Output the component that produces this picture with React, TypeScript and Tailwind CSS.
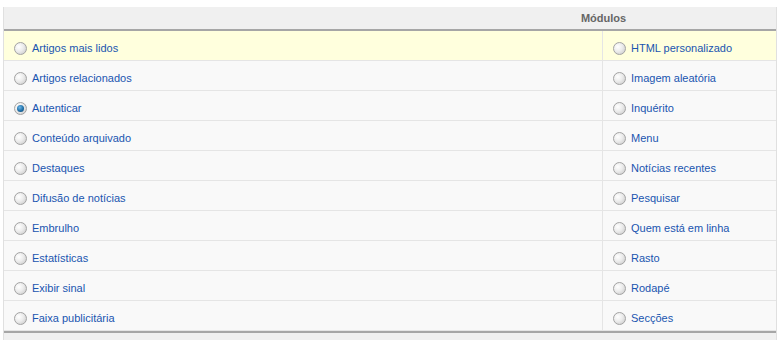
const left = [
  'Artigos mais lidos',
  'Artigos relacionados',
  'Autenticar',
  'Conteúdo arquivado',
  'Destaques',
  'Difusão de notícias',
  'Embrulho',
  'Estatísticas',
  'Exibir sinal',
  'Faixa publicitária',
];

const right = [
  'HTML personalizado',
  'Imagem aleatória',
  'Inquérito',
  'Menu',
  'Notícias recentes',
  'Pesquisar',
  'Quem está em linha',
  'Rasto',
  'Rodapé',
  'Secções',
];

function Radio({ checked }: { checked?: boolean }) {
  return (
    <span className="relative inline-block w-[13px] h-[13px] shrink-0 rounded-full border border-[#a3a3a3] bg-[radial-gradient(circle_at_35%_35%,#ffffff_0%,#ececec_45%,#c4c4c4_100%)]">
      {checked && (
        <span className="absolute left-[2px] top-[2px] w-[7px] h-[7px] rounded-full bg-[radial-gradient(circle_at_40%_35%,#6fb8e8_0%,#1f6fa8_55%,#0c3f66_100%)]" />
      )}
    </span>
  );
}

function Cell({ label, checked }: { label: string; checked?: boolean }) {
  return (
    <div className="flex items-center gap-[5px] pl-[10px] pt-[5px]">
      <Radio checked={checked} />
      <span className="text-[#1a55b0]">{label}</span>
    </div>
  );
}

export default function App() {
  return (
    <div className="w-[777px] h-[340px] bg-white pt-[7px] pl-[3px] overflow-hidden font-['Liberation_Sans',Arial,sans-serif] text-[11px]">
      <div className="border-l border-r border-[#e0e0e0]">
        {/* Header */}
        <div className="flex h-[24px] bg-[#f0f0f0] border-b-2 border-[#a6a6a6]">
          <div className="w-[427px]" />
          <div className="flex-1 flex items-center justify-center font-bold text-[#666]">Módulos</div>
        </div>

        {/* Rows */}
        {left.map((name, i) => (
          <div
            key={name}
            className={`grid grid-cols-[599px_1fr] h-[30px] border-b border-[#e5e5e5] ${
              i === 0 ? 'bg-[#ffffdd]' : 'bg-[#f9f9f9]'
            }`}
          >
            <div className="flex items-center border-r border-[#e5e5e5]">
              <Cell label={name} checked={i === 2} />
            </div>
            <div className="flex items-center">
              <Cell label={right[i]} />
            </div>
          </div>
        ))}

        {/* Footer */}
        <div className="h-[20px] bg-[#f0f0f0] border-t-2 border-[#a6a6a6]" />
      </div>
    </div>
  );
}
